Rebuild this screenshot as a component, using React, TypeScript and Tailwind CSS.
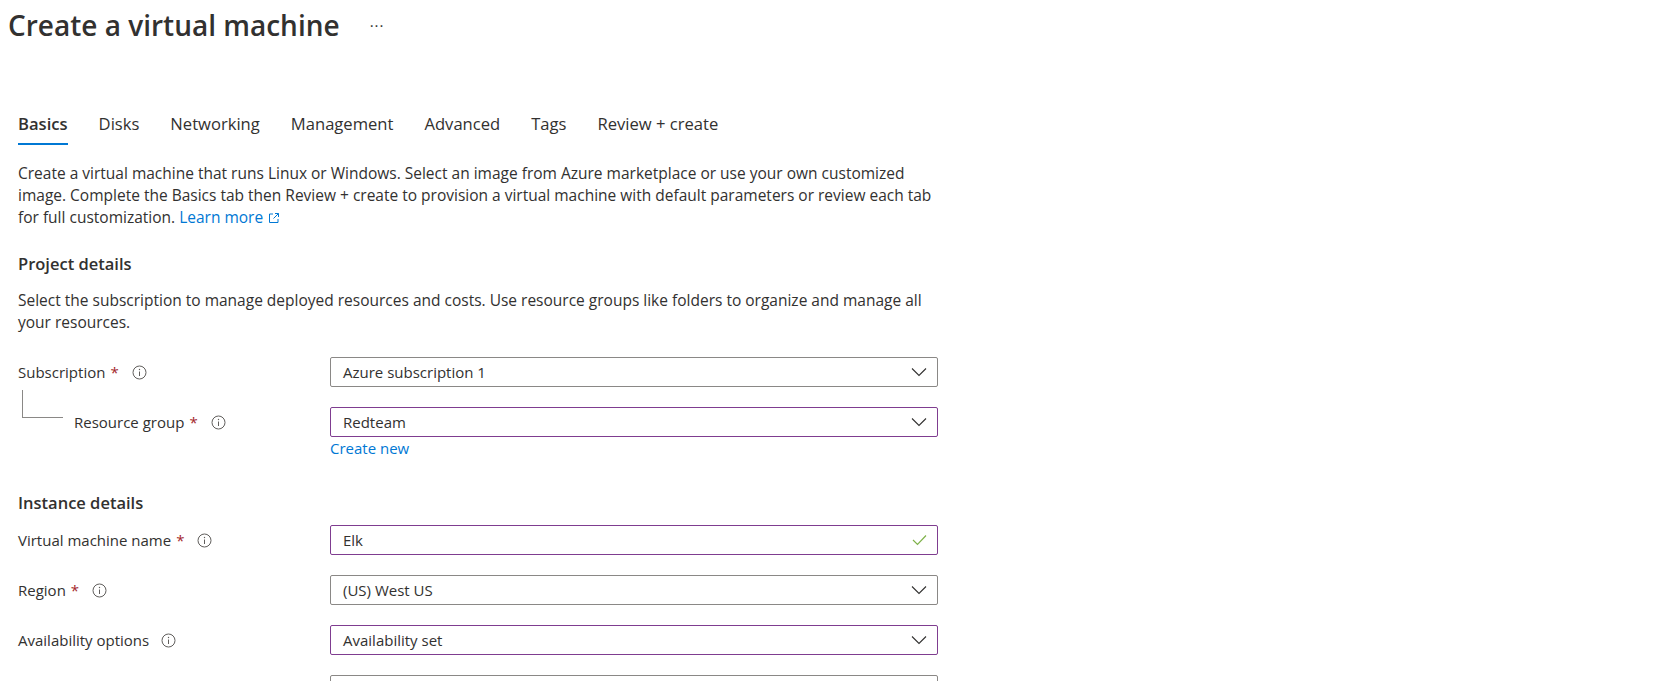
import React from 'react';

const TABS = ['Basics', 'Disks', 'Networking', 'Management', 'Advanced', 'Tags', 'Review + create'];

function InfoIcon() {
  return (
    <svg width="15" height="15" viewBox="0 0 15 15" className="shrink-0">
      <circle cx="7.5" cy="7.5" r="6.5" fill="none" stroke="#605e5c" strokeWidth="1" />
      <line x1="7.5" y1="6.5" x2="7.5" y2="11" stroke="#605e5c" strokeWidth="1" />
      <circle cx="7.5" cy="4.5" r="0.7" fill="#605e5c" />
    </svg>
  );
}

function Chevron() {
  return (
    <svg width="16" height="10" viewBox="0 0 16 10">
      <polyline points="1,1.5 8,8.5 15,1.5" fill="none" stroke="#323130" strokeWidth="1.1" />
    </svg>
  );
}

function Check() {
  return (
    <svg width="15" height="12" viewBox="0 0 15 12">
      <polyline points="1,6 5.5,10.5 14,1.5" fill="none" stroke="#7fb24a" strokeWidth="1.2" />
    </svg>
  );
}

function Label({ text, required }: { text: string; required?: boolean }) {
  return (
    <div className="flex items-center">
      <span>{text}</span>
      {required && <span className="ml-[5px] text-[#a4262c]">*</span>}
      <span className={required ? 'ml-[13px] flex' : 'ml-[12px] flex'}>
        <InfoIcon />
      </span>
    </div>
  );
}

function Field({ value, purple, check }: { value: string; purple?: boolean; check?: boolean }) {
  return (
    <div
      className={`w-[608px] h-[30px] flex items-center justify-between pl-[12px] pr-[10px] border rounded-[2px] ${
        purple ? 'border-[#7f3d90]' : 'border-[#8a8886]'
      }`}
    >
      <span>{value}</span>
      {check ? <Check /> : <Chevron />}
    </div>
  );
}

function Row({ label, required, value, purple, check }: {
  label: string;
  required?: boolean;
  value: string;
  purple?: boolean;
  check?: boolean;
}) {
  return (
    <div className="flex items-center">
      <div className="w-[312px]">
        <Label text={label} required={required} />
      </div>
      <Field value={value} purple={purple} check={check} />
    </div>
  );
}

export default function App() {
  return (
    <div className="w-[1662px] h-[681px] overflow-hidden bg-white text-[#323130] text-[15px] font-['Open_Sans',sans-serif]">
      {/* Title */}
      <div className="h-[50px] flex items-center pl-[8px]">
        <h1 className="text-[28px] font-semibold leading-none">Create a virtual machine</h1>
        <span className="ml-[30px] text-[15px] tracking-[1px] text-[#323130]">···</span>
      </div>

      {/* Tabs */}
      <div className="mt-[60px] pl-[18px] flex gap-[31px] text-[16.6px]">
        {TABS.map((t, i) => (
          <div key={t} className="flex flex-col">
            <span className={`leading-[28px] ${i === 0 ? 'font-semibold' : ''}`}>{t}</span>
            <div className={`mt-[5px] h-[2px] ${i === 0 ? 'bg-[#0078d4]' : ''}`} />
          </div>
        ))}
      </div>

      <div className="pl-[18px]">
        <p className="mt-[17px] w-[925px] text-[15.5px] leading-[22px]">
          Create a virtual machine that runs Linux or Windows. Select an image from Azure marketplace or use
          your own customized image. Complete the Basics tab then Review + create to provision a virtual
          machine with default parameters or review each tab for full customization.{' '}
          <span className="text-[#0078d4]">Learn more</span>
          <svg width="12" height="12" viewBox="0 0 12 12" className="inline-block ml-[5px] align-[-1px]">
            <path d="M5 2H1.5v8.5H10V7" fill="none" stroke="#0078d4" strokeWidth="1" />
            <path d="M7 1.5h3.5V5M10.5 1.5 5.5 6.5" fill="none" stroke="#0078d4" strokeWidth="1" />
          </svg>
        </p>

        <h2 className="mt-[24px] text-[16.5px] font-semibold leading-[24px]">Project details</h2>
        <p className="mt-[13px] w-[925px] text-[15.5px] leading-[22px]">
          Select the subscription to manage deployed resources and costs. Use resource groups like folders to
          organize and manage all your resources.
        </p>

        <div className="mt-[24px]">
          <Row label="Subscription" required value="Azure subscription 1" />
        </div>

        <div className="relative mt-[20px] flex items-center">
          <div className="absolute left-[4px] top-[-17px] w-[41px] h-[28px] border-l border-b border-[#8a8886]" />
          <div className="w-[312px] pl-[56px]">
            <Label text="Resource group" required />
          </div>
          <Field value="Redteam" purple />
        </div>
        <div className="mt-[1px] pl-[312px] leading-[20px] text-[#0078d4]">Create new</div>

        <h2 className="mt-[33px] text-[16.5px] font-semibold leading-[24px]">Instance details</h2>
        <div className="mt-[10px]">
          <Row label="Virtual machine name" required value="Elk" purple check />
        </div>
        <div className="mt-[20px]">
          <Row label="Region" required value="(US) West US" />
        </div>
        <div className="mt-[20px]">
          <Row label="Availability options" value="Availability set" purple />
        </div>
        <div className="mt-[20px] flex">
          <div className="w-[312px]" />
          <div className="w-[608px] h-[30px] border border-[#8a8886] rounded-[2px]" />
        </div>
      </div>
    </div>
  );
}
